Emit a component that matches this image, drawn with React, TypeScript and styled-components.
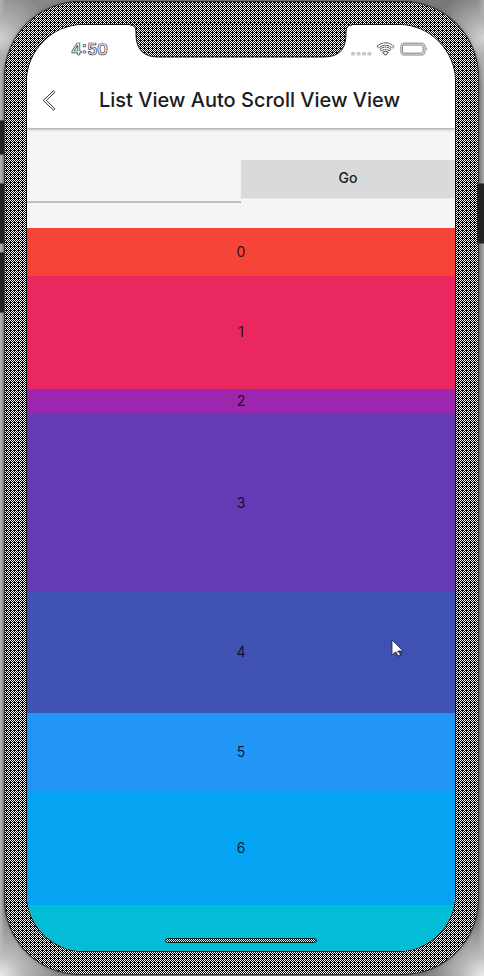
import React from "react";
import styled, { createGlobalStyle } from "styled-components";

const Global = createGlobalStyle`
  * { box-sizing: border-box; }
  body { margin: 0; background: #aaa; font-family: Inter, "Liberation Sans", sans-serif; }
`;

const Backdrop = styled.main`
  display: grid;
  grid-template-columns: 4px 475px 5px;
  width: 484px;
  height: 976px;
  padding: 1px 0;
  overflow: hidden;
  background:
    radial-gradient(circle at 0 38px, #d2d2d2 0, #b0b0b0 18px, #80808000 50px),
    radial-gradient(circle at 484px 38px, #d2d2d2 0, #b0b0b0 18px, #80808000 50px),
    radial-gradient(circle at 0 976px, #ededed 0, #bdbdbd 20px, #70707000 60px),
    radial-gradient(circle at 484px 976px, #ededed 0, #bdbdbd 20px, #70707000 60px),
    linear-gradient(90deg, #b4b4b4 0, #888 5px, #777 478px, #aaa 484px);
`;

const Phone = styled.div`
  position: relative;
  height: 974px;
  padding: 23px 23px 24px 22px;
  border: 1px solid #333;
  border-radius: 76px;
  box-shadow: 0 0 3px #4448;
  background-color: #000;
  background-image:
    conic-gradient(at 1px 1px, #0000 75%, #000 0),
    conic-gradient(#fff 25%, #000 0 50%, #fff 0 75%, #000 0);
  background-size: 4px 4px, 2px 2px;
  background-position: 1px 0, 0 0;
`;

const Screen = styled.section`
  display: flex;
  flex-direction: column;
  position: relative;
  width: 428px;
  height: 926px;
  overflow: hidden;
  border-radius: 57px;
  background: #f5f5f5;
  box-shadow: 0 0 0 1px #161616;
`;

const Header = styled.header`
  position: relative;
  height: 103px;
  flex: none;
  background: #fff;
  box-shadow: 0 1px 3px #0006;
`;

const StatusBar = styled.div`
  display: flex;
  justify-content: space-between;
  align-items: center;
  height: 48px;
  padding: 0 26px 0 43px;
`;

const TitleBar = styled.div`
  display: grid;
  grid-template-columns: 45px 1fr 28px;
  align-items: center;
  height: 55px;
`;

const Title = styled.h1`
  margin: 0;
  padding-bottom: 1px;
  text-align: center;
  color: #1c1c1c;
  font-size: 20px;
  line-height: 27px;
  font-weight: 500;
  white-space: nowrap;
`;

const Controls = styled.div`
  display: grid;
  grid-template-columns: 214px 214px;
  align-items: start;
  height: 100px;
  flex: none;
  padding-top: 32px;
  background: conic-gradient(#fafafa 25%, #f1f1f1 0 50%, #f8f8f8 0 75%, #f1f1f1 0) 0 0 / 2px 2px;
`;

const Field = styled.input`
  width: 214px;
  height: 43px;
  padding: 0;
  border: 0;
  border-bottom: 2px solid #bebebe;
  outline: 0;
  background: transparent;
`;

const GoButton = styled.button`
  height: 37px;
  padding: 0 0 2px;
  border: 0;
  background: #dadada;
  box-shadow: 0 1px 1px #0002;
  color: #1c1c1c;
  font: 500 14px/34px Inter, sans-serif;
  letter-spacing: 0.1px;
`;

const Row = styled.div<{ $height: number; $color: string }>`
  display: flex;
  flex: none;
  align-items: center;
  justify-content: center;
  height: ${(p) => p.$height}px;
  padding-bottom: 1px;
  background: ${(p) => p.$color};
  color: #000c;
  font-size: 14px;
  line-height: 20px;
`;

const Notch = styled.svg`
  position: absolute;
  top: 0;
  left: 99px;
`;

const HomeIndicator = styled.div`
  position: absolute;
  left: 138px;
  bottom: 8px;
  width: 152px;
  height: 5px;
  border: 1px solid #002a30;
  border-radius: 3px;
  background: conic-gradient(#fff 25%, #000 0 50%, #fff 0 75%, #000 0) 0 0 / 2px 2px;
`;

const KeyRail = styled.div<{ $start: number; $overlap?: number }>`
  z-index: 1;
  display: flex;
  flex-direction: column;
  gap: 8px;
  margin-left: ${(p) => -(p.$overlap ?? 0)}px;
  padding-top: ${(p) => p.$start}px;
`;

const SideKey = styled.div<{ $height: number; $small?: boolean }>`
  height: ${(p) => p.$height}px;
  margin-bottom: ${(p) => (p.$small ? 20 : 0)}px;
  border: solid #555;
  border-width: 1px 0;
  border-radius: 1px;
  background: #222;
`;

const Pointer = styled.svg`
  position: absolute;
  left: 385px;
  top: 636px;
`;

const rows = [
  { height: 48, color: "#f64438" },
  { height: 113, color: "#ea285f" },
  { height: 25, color: "#9c27ae" },
  { height: 178, color: "#673ab5" },
  { height: 121, color: "#4051b4" },
  { height: 79, color: "#2296f6" },
  { height: 113, color: "#05a4f3" },
  { height: 60, color: "#03bcd6" },
];

export default function App() {
  return (
    <>
      <Global />
      <Backdrop>
        <KeyRail $start={119}>
          <SideKey $height={35} $small />
          <SideKey $height={61} />
          <SideKey $height={61} />
        </KeyRail>
        <Phone>
          <Screen>
            <Header>
              <StatusBar>
                <svg width="42" height="20" viewBox="0 0 42 20" aria-label="4:50">
                  <text x="1" y="15.5" fontSize="16.5" fontWeight="600" textLength="37" fill="#fff" stroke="#333" strokeWidth=".7">4:50</text>
                </svg>
                <svg width="78" height="18" viewBox="0 0 78 18" fill="none">
                  <g fill="#c8c8c8">
                    <rect x="0" y="12" width="4" height="3.5" rx="1" />
                    <rect x="5.5" y="12" width="4" height="3.5" rx="1" />
                    <rect x="11" y="12" width="4" height="3.5" rx="1" />
                    <rect x="16.3" y="12" width="4" height="3.5" rx="1" />
                  </g>
                  <g stroke="#222" strokeWidth=".9">
                    <path d="M26 6.300Q34.500-.7 43 6.300L41.300 8.100Q34.500 2.400 27.700 8.100Z" strokeDasharray="2 .5" />
                    <path d="M29 9.300Q34.500 4.800 40 9.300L38.400 11Q34.500 7.800 30.600 11Z" strokeDasharray="2 .5" />
                    <path d="M31.700 12.300Q34.500 10.200 37.300 12.300L34.500 15.300Z" />
                  </g>
                  <rect x="49.8" y="3.3" width="24.2" height="11.7" rx="3.5" stroke="#aaa" strokeWidth="1.4" />
                  <rect x="51.5" y="5" width="20.6" height="8.2" rx="1.5" stroke="#555" strokeWidth=".8" />
                  <path d="M75 7q2.500 2 0 4z" fill="#aaa" />
                </svg>
              </StatusBar>
              <TitleBar>
                <svg width="45" height="28" viewBox="0 0 45 28" fill="none" stroke="#222" strokeWidth=".9">
                  <path d="M26.5 3.700 16.2 13.500l10.3 9.700 1.300-1.500-8.500-8.200 8.500-8.200Z" />
                </svg>
                <Title>List View Auto Scroll View View</Title>
              </TitleBar>
            </Header>
            <Controls>
              <Field aria-label="Index" />
              <GoButton>Go</GoButton>
            </Controls>
            {rows.map((row, i) => (
              <Row key={i} $height={row.height} $color={row.color}>{i < 7 ? i : null}</Row>
            ))}
            <HomeIndicator />
          </Screen>
          <Notch width="260" height="58" viewBox="0 0 260 58">
            <defs>
              <pattern id="mesh" width="4" height="4" patternUnits="userSpaceOnUse">
                <path d="M0 0h4v4H0z" fill="#000" />
                <path d="M0 0h1v1H0zM2 0h1v1H2zM1 1h1v1H1zM3 1h1v1H3zM2 2h1v1H2zM1 3h1v1H1zM3 3h1v1H3z" fill="#fff" shapeRendering="crispEdges" />
              </pattern>
            </defs>
            <path d="M26 22v1q6 0 6 7v4q1 21 22 21H220q21 0 22-21v-4q0-7 6-7v-1Z" fill="url(#mesh)" />
            <path d="M26 23q6 0 6 7v4q1 21 22 21H220q21 0 22-21v-4q0-7 6-7" fill="none" stroke="#222" />
          </Notch>
          <Pointer width="16" height="22" viewBox="0 0 16 22">
            <path d="M2 2v15l3.500-3 2.500 4.500 2.500-1.300-2-4.200H13Z" fill="#fff" stroke="#17204c" strokeWidth=".8" />
            <circle cx="9" cy="15.5" r="2.3" fill="none" stroke="#17204c" strokeWidth=".8" />
          </Pointer>
        </Phone>
        <KeyRail $start={182} $overlap={2}>
          <SideKey $height={61} />
        </KeyRail>
      </Backdrop>
    </>
  );
}
